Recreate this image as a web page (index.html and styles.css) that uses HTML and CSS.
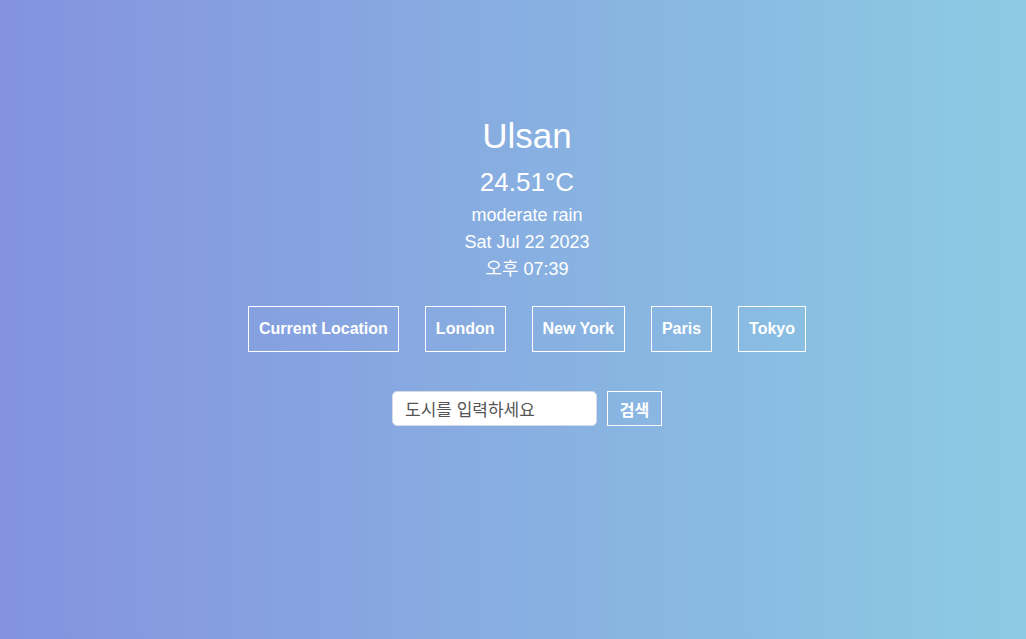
FILE: index.html
```html
<!DOCTYPE html>
<html lang="ko">
<head>
<meta charset="utf-8">
<title>Weather</title>
<link rel="stylesheet" href="styles.css">
</head>
<body>
<main class="app">
  <section class="weather">
    <h1 class="city">Ulsan</h1>
    <div class="temp">24.51°C</div>
    <div class="info">moderate rain</div>
    <div class="info">Sat Jul 22 2023</div>
    <div class="info">오후 07:39</div>
  </section>
  <nav class="cities">
    <button class="city-btn">Current Location</button>
    <button class="city-btn">London</button>
    <button class="city-btn">New York</button>
    <button class="city-btn">Paris</button>
    <button class="city-btn">Tokyo</button>
  </nav>
  <form class="search">
    <input class="search-input" type="text" placeholder="도시를 입력하세요">
    <button class="search-btn" type="button">검색</button>
  </form>
</main>
</body>
</html>
```
FILE: styles.css
```css
html, body {
  margin: 0;
  padding: 0;
  height: 100%;
}
body {
  background: linear-gradient(to right, #8492df, #8ccbe3);
  font-family: "Liberation Sans", Arial, "Noto Sans CJK KR", sans-serif;
  color: #ffffff;
}
.app {
  display: flex;
  flex-direction: column;
  align-items: center;
  padding-top: 115px;
  padding-left: 28px;
}
.weather {
  display: flex;
  flex-direction: column;
  align-items: center;
}
.city {
  margin: 0;
  font-size: 35px;
  font-weight: normal;
  line-height: 42px;
}
.temp {
  margin-top: 7px;
  font-size: 26px;
  line-height: 37px;
  margin-bottom: 1px;
}
.info {
  font-size: 18px;
  line-height: 27px;
}
.cities {
  display: flex;
  gap: 26px;
  margin-top: 23px;
}
.city-btn {
  height: 46px;
  box-sizing: border-box;
  padding: 0 10px;
  border: 1px solid #ffffff;
  background: transparent;
  color: #ffffff;
  font-family: "Liberation Sans", Arial, sans-serif;
  font-size: 16px;
  font-weight: bold;
  cursor: pointer;
}
.search {
  display: flex;
  gap: 10px;
  margin-top: 39px;
}
.search-input {
  width: 205px;
  height: 35px;
  box-sizing: border-box;
  padding: 0 12px;
  border: 1px solid #d6dbe8;
  border-radius: 5px;
  background: #ffffff;
  font-family: "Noto Sans CJK KR", sans-serif;
  font-size: 17px;
  color: #333;
}
.search-input::placeholder {
  color: #555;
  opacity: 1;
}
.search-btn {
  width: 55px;
  height: 35px;
  box-sizing: border-box;
  padding: 0;
  border: 1px solid #ffffff;
  background: transparent;
  color: #ffffff;
  font-family: "Noto Sans CJK KR", sans-serif;
  font-size: 16px;
  font-weight: bold;
}
```
